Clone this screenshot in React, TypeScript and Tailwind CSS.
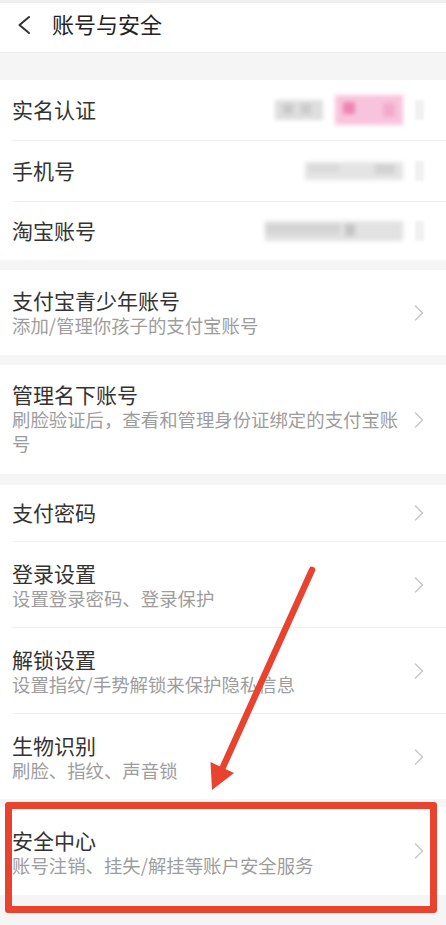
import React from "react";

function Chevron() {
  return (
    <svg width="10" height="18" viewBox="0 0 10 18" className="shrink-0 ml-[12px]">
      <polyline points="1.5,2 8.5,9 1.5,16" fill="none" stroke="#c9c9c9" strokeWidth="1.6" strokeLinecap="round" strokeLinejoin="round" />
    </svg>
  );
}

function Divider() {
  return <div className="ml-[13px] h-px bg-[#efefef]" />;
}

function Gap({ h }: { h: string }) {
  return <div className={h} />;
}

function TwoLine({
  title,
  sub,
  h,
  pt,
}: {
  title: string;
  sub: string;
  h: string;
  pt: string;
}) {
  return (
    <div className={`flex bg-white pl-[12px] pr-[22px] ${h}`}>
      <div className={`flex-1 min-w-0 ${pt}`}>
        <div className="text-[21px] leading-[26px] text-[#333333]">{title}</div>
        <div className="text-[18.4px] leading-[24px] text-[#9d9d9d]">{sub}</div>
      </div>
      <div className="flex items-center">
        <Chevron />
      </div>
    </div>
  );
}

export default function App() {
  return (
    <div className="relative min-h-[925px] w-[446px] overflow-hidden bg-[#f5f5f5] font-['Noto_Sans_CJK_SC','Noto_Sans',sans-serif]">
      {/* Header */}
      <div className="flex h-[53px] items-center border-t-[3px] border-b border-t-[#efefef] border-b-[#ebebeb] bg-white pb-[9px]">
        <svg width="14" height="20" viewBox="0 0 14 20" className="ml-[17px] mt-[3px]">
          <polyline points="12,2 2.5,10 12,18" fill="none" stroke="#333" strokeWidth="2" strokeLinecap="round" strokeLinejoin="round" />
        </svg>
        <div className="ml-[21px] text-[22px] leading-none text-[#222222]">账号与安全</div>
      </div>

      <Gap h="h-[27px]" />

      {/* Group 1 */}
      <div className="bg-white">
        <div className="flex h-[60px] items-center pl-[12px] pr-[22px]">
          <div className="flex-1 text-[21px] text-[#333333]">实名认证</div>
          <div className="flex items-center">
            <div className="relative h-[20px] w-[48px] bg-[#dedede] blur-[2px]">
              <div className="absolute left-[8px] top-[4px] h-[10px] w-[10px] bg-[#c9c9c9]" />
              <div className="absolute left-[26px] top-[4px] h-[10px] w-[10px] bg-[#cccccc]" />
            </div>
            <div className="relative ml-[12px] h-[30px] w-[68px] bg-[#f8c4dd] blur-[2px]">
              <div className="absolute left-[8px] top-[7px] h-[12px] w-[12px] bg-[#ee84b3]" />
              <div className="absolute left-[48px] top-[8px] h-[14px] w-[12px] bg-[#f3abcd]" />
            </div>
            <div className="ml-[12px] h-[20px] w-[9px] bg-[#f1f1f1] blur-[1px]" />
          </div>
        </div>
        <Divider />
        <div className="flex h-[60px] items-center pl-[12px] pr-[22px]">
          <div className="flex-1 text-[21px] text-[#333333]">手机号</div>
          <div className="flex items-center">
            <div className="relative h-[18px] w-[98px] bg-[#e4e4e4] blur-[2px]">
              <div className="absolute left-[70px] top-[2px] h-[10px] w-[20px] bg-[#d2d2d2]" />
              <div className="absolute left-[4px] top-[2px] h-[8px] w-[30px] bg-[#dadada]" />
            </div>
            <div className="ml-[12px] h-[20px] w-[9px] bg-[#f1f1f1] blur-[1px]" />
          </div>
        </div>
        <Divider />
        <div className="flex h-[58px] items-center pl-[12px] pr-[22px]">
          <div className="flex-1 text-[21px] text-[#333333]">淘宝账号</div>
          <div className="flex items-center">
            <div className="relative h-[20px] w-[138px] bg-[#e2e2e2] blur-[2px]">
              <div className="absolute left-[0px] top-[3px] h-[10px] w-[75px] bg-[#d4d4d4]" />
              <div className="absolute left-[80px] top-[3px] h-[12px] w-[10px] bg-[#c6c6c6]" />
            </div>
            <div className="ml-[12px] h-[20px] w-[9px] bg-[#f1f1f1] blur-[1px]" />
          </div>
        </div>
      </div>

      <Gap h="h-[10px]" />

      {/* Group 2 */}
      <TwoLine title="支付宝青少年账号" sub="添加/管理你孩子的支付宝账号" h="h-[85px]" pt="pt-[17px]" />

      <Gap h="h-[10px]" />

      {/* Group 3 */}
      <TwoLine
        title="管理名下账号"
        sub="刷脸验证后，查看和管理身份证绑定的支付宝账号"
        h="h-[109px]"
        pt="pt-[16px]"
      />

      <Gap h="h-[11px]" />

      {/* Group 4 */}
      <div className="bg-white">
        <div className="flex h-[56px] items-center pl-[12px] pr-[22px]">
          <div className="flex-1 text-[21px] text-[#333333]">支付密码</div>
          <Chevron />
        </div>
        <Divider />
        <TwoLine title="登录设置" sub="设置登录密码、登录保护" h="h-[85px]" pt="pt-[18px]" />
        <Divider />
        <TwoLine title="解锁设置" sub="设置指纹/手势解锁来保护隐私信息" h="h-[85px]" pt="pt-[18px]" />
        <Divider />
        <TwoLine title="生物识别" sub="刷脸、指纹、声音锁" h="h-[85px]" pt="pt-[18px]" />
      </div>

      <Gap h="h-[8px]" />

      {/* Group 5 */}
      <TwoLine title="安全中心" sub="账号注销、挂失/解挂等账户安全服务" h="h-[88px]" pt="pt-[20px]" />

      {/* Annotation: red box */}
      <div className="absolute left-[5px] top-[802px] h-[111px] w-[432px] rounded-[3px] border-[7px] border-[#e8432f]" />

      {/* Annotation: red arrow */}
      <svg className="absolute left-0 top-0" width="446" height="925" viewBox="0 0 446 925">
        <line x1="312" y1="570" x2="223" y2="767" stroke="#e8432f" strokeWidth="6.5" strokeLinecap="round" />
        <polygon points="212,790 210.5,762 234,773" fill="#e8432f" />
      </svg>
    </div>
  );
}
